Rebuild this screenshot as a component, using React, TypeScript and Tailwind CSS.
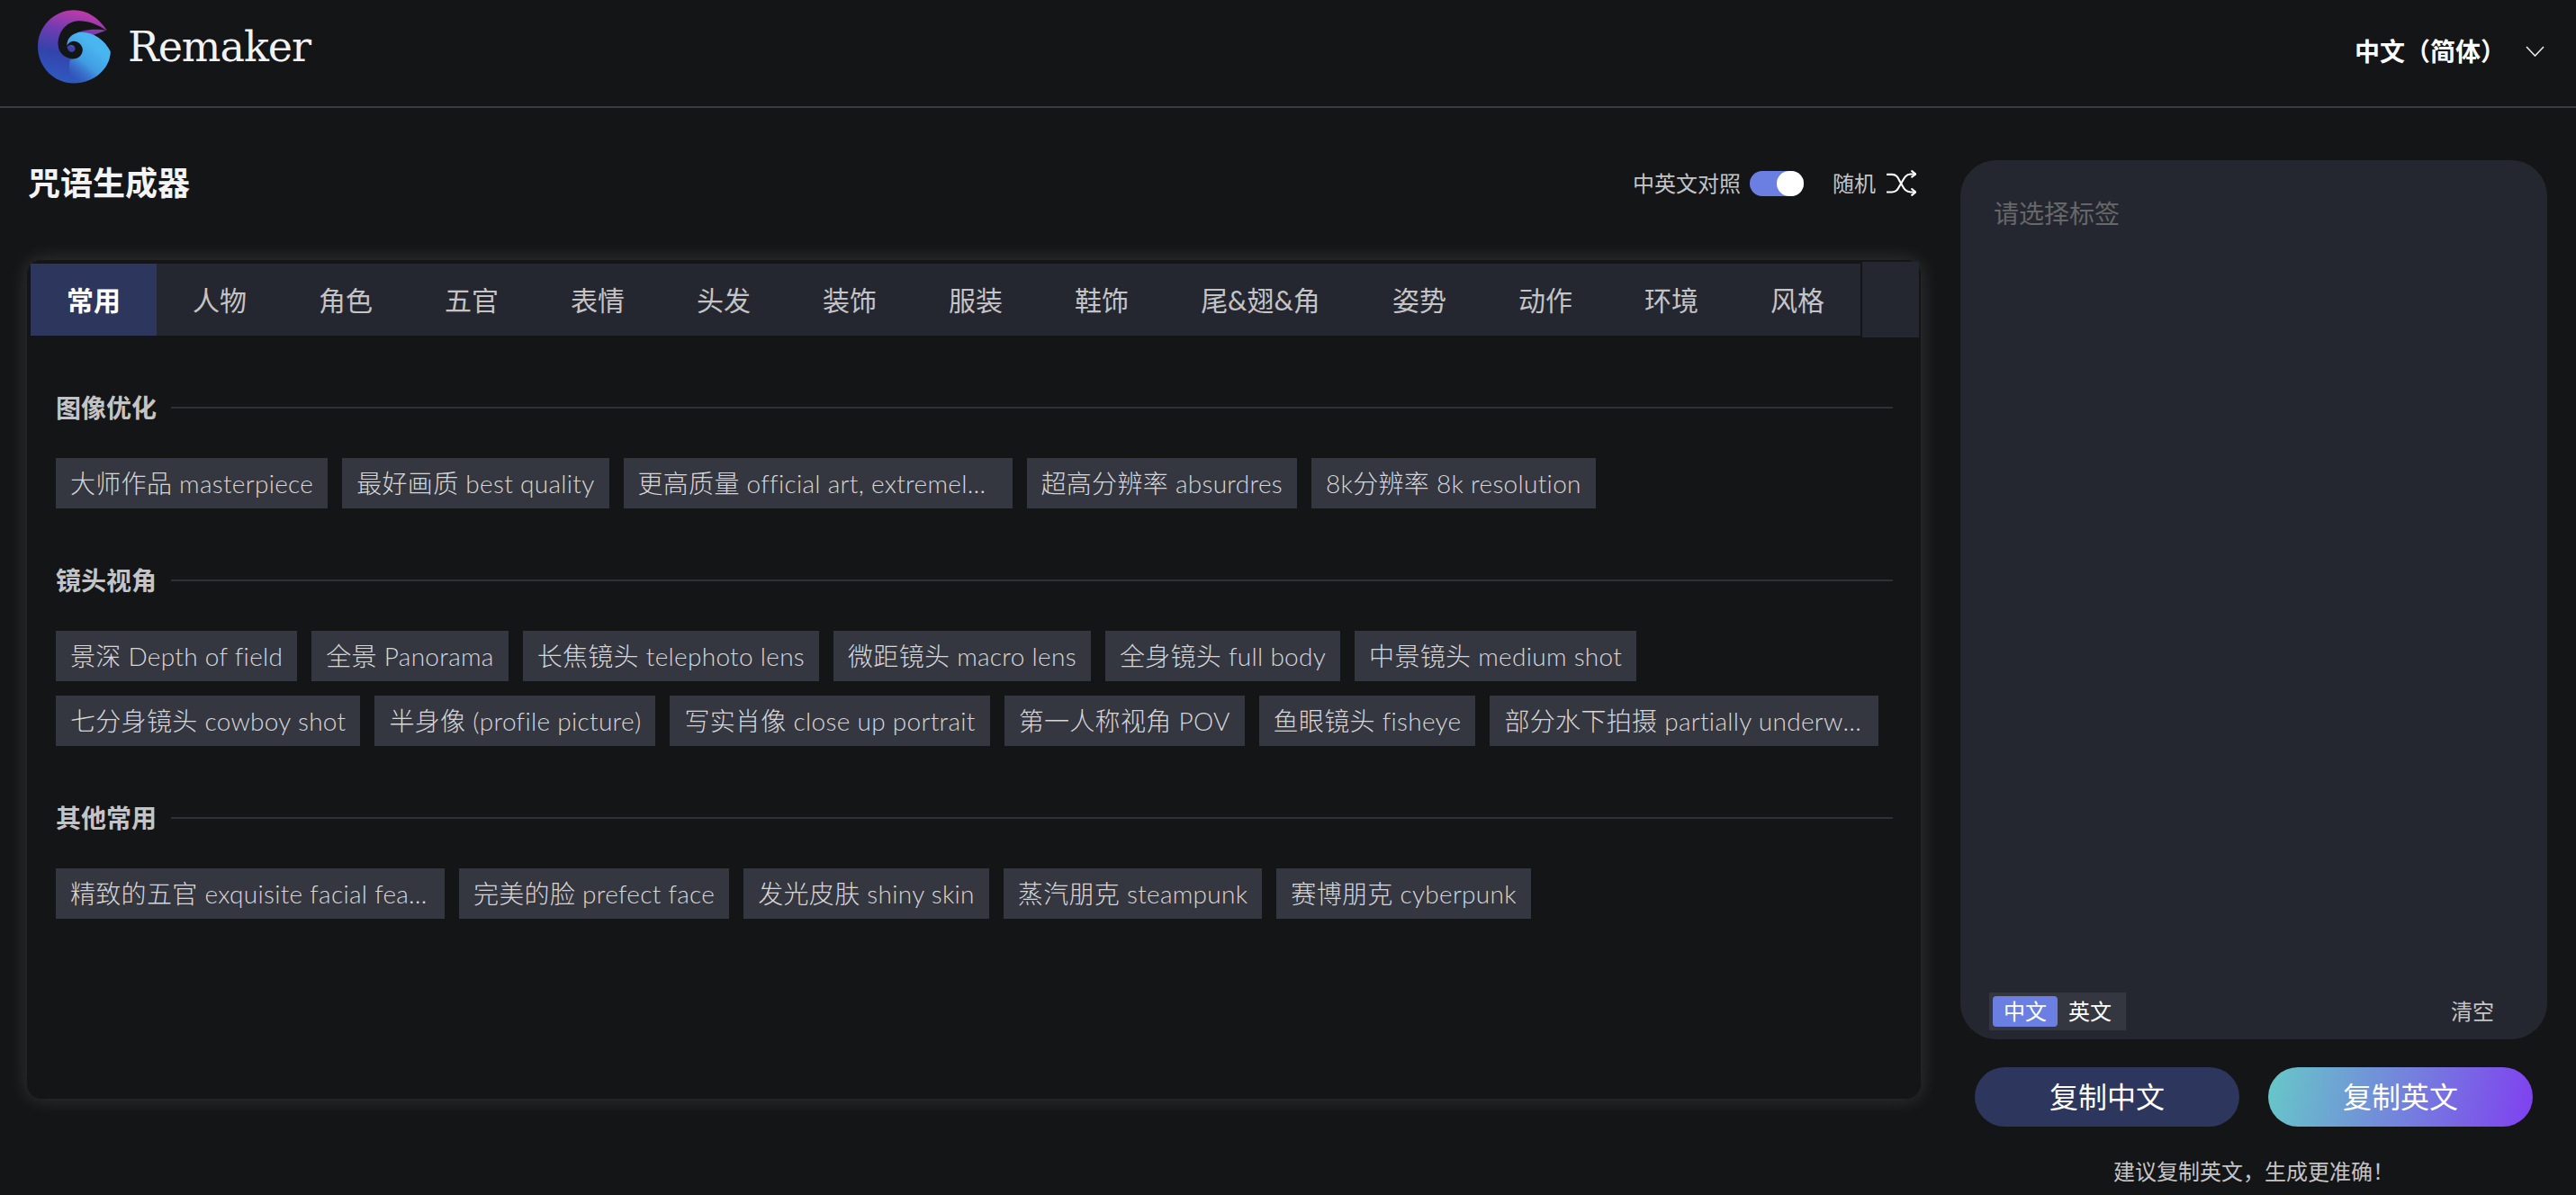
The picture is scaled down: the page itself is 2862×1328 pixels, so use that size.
import React from 'react';

const FONT = 'font-["Lato","Noto_Sans_CJK_SC",sans-serif]';

const TABS = ['常用', '人物', '角色', '五官', '表情', '头发', '装饰', '服装', '鞋饰', '尾&翅&角', '姿势', '动作', '环境', '风格'];

const SECTIONS = [
    {
        title: '图像优化',
        tags: [
            '大师作品 masterpiece',
            '最好画质 best quality',
            '更高质量 official art, extremely detailed',
            '超高分辨率 absurdres',
            '8k分辨率 8k resolution',
        ],
    },
    {
        title: '镜头视角',
        tags: [
            '景深 Depth of field',
            '全景 Panorama',
            '长焦镜头 telephoto lens',
            '微距镜头 macro lens',
            '全身镜头 full body',
            '中景镜头 medium shot',
            '七分身镜头 cowboy shot',
            '半身像 (profile picture)',
            '写实肖像 close up portrait',
            '第一人称视角 POV',
            '鱼眼镜头 fisheye',
            '部分水下拍摄 partially underwater shot',
        ],
    },
    {
        title: '其他常用',
        tags: [
            '精致的五官 exquisite facial features',
            '完美的脸 prefect face',
            '发光皮肤 shiny skin',
            '蒸汽朋克 steampunk',
            '赛博朋克 cyberpunk',
        ],
    },
];

const Logo = () => (
    <svg viewBox="127 33 244 246" className="w-[81px] h-[82px] shrink-0">
        <defs>
            <linearGradient id="logoOuter" x1="0.62" y1="0" x2="0.4" y2="1">
                <stop offset="0" stopColor="#c43aa8"/>
                <stop offset="0.32" stopColor="#6f3cb0"/>
                <stop offset="0.62" stopColor="#3343ac"/>
                <stop offset="1" stopColor="#2f5ac0"/>
            </linearGradient>
            <linearGradient id="logoInner" x1="0.68" y1="0.3" x2="0.22" y2="0.95">
                <stop offset="0" stopColor="#4ab6f0"/>
                <stop offset="0.5" stopColor="#3f9ce2"/>
                <stop offset="1" stopColor="#3f7ed8" stopOpacity="0"/>
            </linearGradient>
        </defs>
        <path
            d="M358 100C330 58 292 33 248 33C181 33 127 88 127 155C127 223 181 278 248 278C315 278 370 228 370 172C350 130 305 102 262 108C225 115 215 130 220 150Z"
            fill="url(#logoOuter)"/>
        <path
            d="M222 150C220 125 240 113 262 108C305 102 350 130 370 172C370 228 315 278 250 278C232 250 228 225 235 200C262 196 276 180 276 160Z"
            fill="url(#logoInner)"/>
        <path
            d="M358 102C325 78 285 66 255 70C215 76 193 115 195 150C197 182 225 198 250 196C270 194 280 175 276 160C272 142 250 132 236 140C228 145 224 152 223 158C232 148 248 148 252 160C254 172 240 178 232 170C220 158 222 132 240 118C265 100 320 92 358 102Z"
            fill="#141517"/>
    </svg>
);

const ShuffleIcon = () => (
    <svg viewBox="48 26 96 84" className="w-[33px] h-[29px] shrink-0" fill="none" stroke="#fff" strokeWidth="6" strokeLinecap="round" strokeLinejoin="round">
        <path d="M50 40H66C84 40 86 56 95 69C104 84 108 97 126 97H141"/>
        <path d="M50 97H66C84 97 86 82 95 69C104 54 108 40 126 39H141"/>
        <polyline points="130,29 142,39 130,48"/>
        <polyline points="130,87 142,97 130,107"/>
    </svg>
);

const Tag = ({text}: {text: string}) => (
    <div className="h-14 max-w-[432px] px-4 bg-[#343640] text-[#d6d6d8] text-[28px] font-light tracking-[0.3px] leading-[56px] truncate">
        {text}
    </div>
);

export default function App() {
    return (
        <div className={`min-h-screen bg-[#141517] text-white ${FONT}`}>
            <header className="h-[120px] border-b-2 border-[#383a43] flex items-center justify-between pl-[42px] pr-[35px]">
                <div className="flex items-center gap-[19px] -mt-[14px]">
                    <Logo/>
                    <span className='font-["DejaVu_Serif",serif] text-[46px] leading-none tracking-[-1px] text-[#f2f2f2]'>Remaker</span>
                </div>
                <div className="flex items-center gap-[22px] -mt-[4px]">
                    <span className="text-[28px] font-bold">中文（简体）</span>
                    <svg viewBox="0 0 21 12" className="w-[21px] h-[12px]" fill="none" stroke="#e8e8e8" strokeWidth="1.6">
                        <polyline points="1,1 10.5,11 20,1"/>
                    </svg>
                </div>
            </header>

            <main className="flex pl-[30px] pr-[32px]">
                <section className="w-[2104px] shrink-0">
                    <div className="h-[169px] flex items-center justify-between pl-px pr-[5px] pb-[2px]">
                        <h1 className="text-[36px] font-bold text-[#f4f4f4] -mt-[2px]">咒语生成器</h1>
                        <div className="flex items-center text-[24px] text-[#c4c4c6]">
                            <span>中英文对照</span>
                            <div className="ml-[10px] w-[60px] h-[28px] rounded-full bg-[#6b7fe3] flex justify-end">
                                <div className="w-[30px] h-[28px] rounded-full bg-white"/>
                            </div>
                            <span className="ml-[32px]">随机</span>
                            <div className="ml-[12px]"><ShuffleIcon/></div>
                        </div>
                    </div>

                    <div className="h-[932px] rounded-2xl bg-[#141517] pt-[2px] pl-[4px] pr-[2px] shadow-[0_0_22px_rgba(255,255,255,0.14)]">
                        <div className="flex items-center">
                            <div className="flex h-20 bg-[#252730]">
                                {TABS.map((tab, i) => (
                                    <div key={tab}
                                         className={i === 0
                                             ? "w-[140px] flex items-center justify-center text-[30px] font-bold text-white bg-[#2d365c]"
                                             : tab === '尾&翅&角'
                                                 ? "w-[213px] flex items-center justify-center text-[30px] text-[#c4c4c6]"
                                                 : "w-[140px] flex items-center justify-center text-[30px] text-[#c4c4c6]"}>
                                        {tab}
                                    </div>
                                ))}
                            </div>
                            <div className="ml-[2px] h-[84px] flex-1 bg-[#252730]"/>
                        </div>

                        <div className="pt-[58px] pl-[28px] pr-[29px]">
                            {SECTIONS.map((section) => (
                                <div key={section.title} className="mb-[60px]">
                                    <div className="h-10 flex items-center gap-[16px] mb-9">
                                        <span className="text-[28px] font-bold text-[#c4c4c6] whitespace-nowrap">{section.title}</span>
                                        <div className="flex-1 h-[2px] bg-[#2f3038]"/>
                                    </div>
                                    <div className="flex flex-wrap gap-4">
                                        {section.tags.map((tag) => <Tag key={tag} text={tag}/>)}
                                    </div>
                                </div>
                            ))}
                        </div>
                    </div>
                </section>

                <aside className="ml-[44px] flex-1 pt-[58px]">
                    <div className="h-[977px] rounded-[40px] bg-[#252730] flex flex-col justify-between pt-[38px] pb-[10px] pl-[32px] pr-[59px]">
                        <p className="pl-[5px] text-[28px] text-[#666769]">请选择标签</p>
                        <div className="flex items-center justify-between">
                            <div className="h-[42px] w-[152px] bg-[#343640] flex items-center pl-1 text-[24px]">
                                <div className="w-[72px] h-[34px] rounded bg-[#6b7fe3] flex items-center justify-center">中文</div>
                                <div className="ml-[12px]">英文</div>
                            </div>
                            <span className="text-[24px] text-[#c4c4c6]">清空</span>
                        </div>
                    </div>

                    <div className="mt-[31px] px-4 flex gap-8">
                        <button className="w-[294px] h-[66px] rounded-full bg-[#2d365c] text-[32px]">复制中文</button>
                        <button className="w-[294px] h-[66px] rounded-full bg-[linear-gradient(100deg,#67c8c8,#8040f0)] text-[32px]">复制英文</button>
                    </div>
                    <p className="mt-[32px] text-center text-[24px] text-[#c4c4c6]">建议复制英文，生成更准确！</p>
                </aside>
            </main>
        </div>
    );
}
